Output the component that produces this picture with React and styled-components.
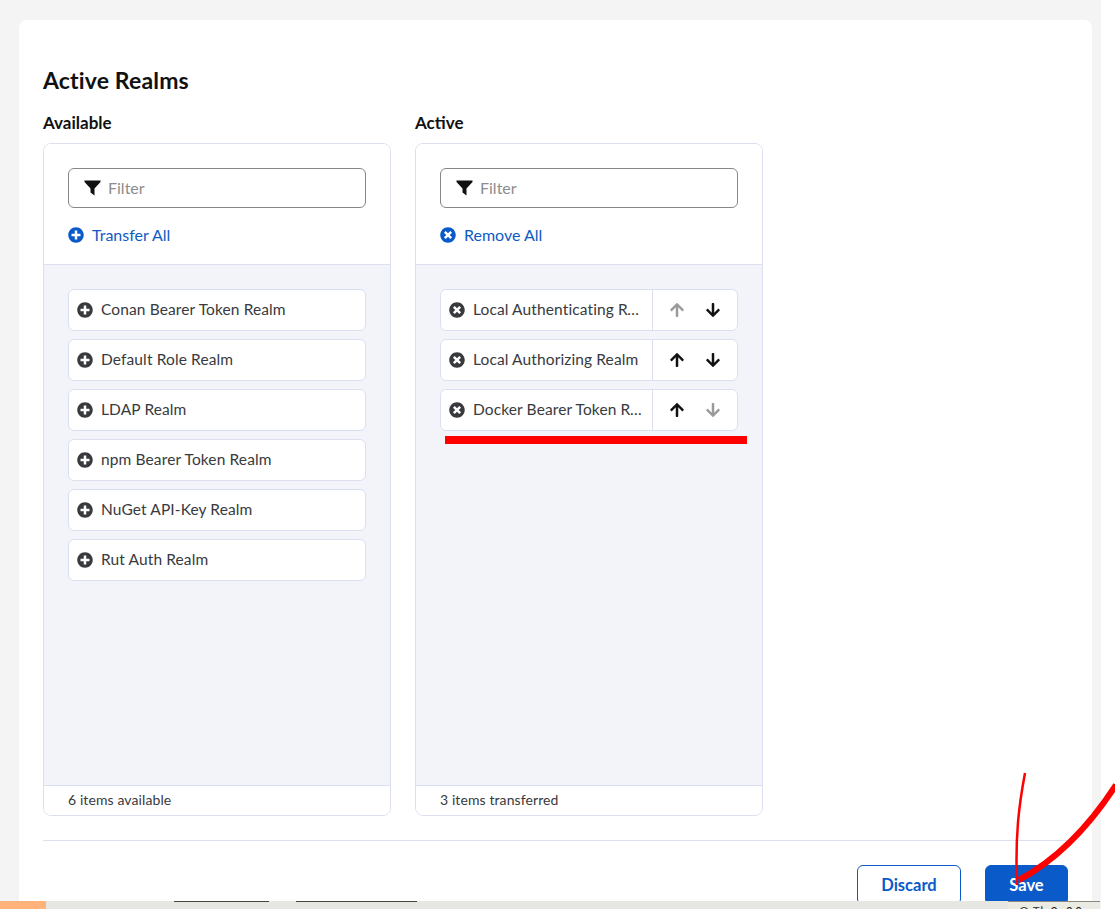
import React from 'react'
import styled, { createGlobalStyle } from 'styled-components'
import { FaPlusCircle, FaTimesCircle, FaArrowUp, FaArrowDown } from 'react-icons/fa'

const available = ['Conan Bearer Token Realm', 'Default Role Realm', 'LDAP Realm', 'npm Bearer Token Realm', 'NuGet API-Key Realm', 'Rut Auth Realm']
const active = [
    { name: 'Local Authenticating Realm', up: false, down: true },
    { name: 'Local Authorizing Realm', up: true, down: true },
    { name: 'Docker Bearer Token Realm', up: true, down: false },
]

function FilterIcon() {
    return (
        <svg viewBox="0 0 17 16" fill="currentColor">
            <path d="M0.5 0.5 H16.5 V2 L10.5 8.5 V15.5 L6.5 12.5 V8.5 L0.5 2 Z" />
        </svg>
    )
}

function TransferColumn({ title, actionIcon, actionLabel, footer, children }) {
    return (
        <Column>
            <ColumnTitle>{title}</ColumnTitle>
            <TransferBox>
                <BoxHeader>
                    <FilterField>
                        <FilterIcon />
                        <LiftedText>Filter</LiftedText>
                    </FilterField>
                    <BoxAction>
                        {actionIcon}
                        <LiftedText>{actionLabel}</LiftedText>
                    </BoxAction>
                </BoxHeader>
                <ItemList>{children}</ItemList>
                <BoxFooter>{footer}</BoxFooter>
            </TransferBox>
        </Column>
    )
}

export default function App() {
    return (
        <>
            <GlobalStyle />
            <Page>
                <Surface>
                    <Card>
                        <Heading>Active Realms</Heading>
                        <Columns>
                            <TransferColumn title="Available" actionIcon={<FaPlusCircle />} actionLabel="Transfer All" footer="6 items available">
                                {available.map((name) => (
                                    <Item key={name}>
                                        <ItemLabel>
                                            <FaPlusCircle />
                                            <ItemText>{name}</ItemText>
                                        </ItemLabel>
                                    </Item>
                                ))}
                            </TransferColumn>
                            <TransferColumn title="Active" actionIcon={<FaTimesCircle />} actionLabel="Remove All" footer="3 items transferred">
                                {active.map((item) => (
                                    <Item key={item.name}>
                                        <ItemLabel>
                                            <FaTimesCircle />
                                            <ItemText>{item.name}</ItemText>
                                        </ItemLabel>
                                        <ItemArrows>
                                            <Arrow $disabled={!item.up}><FaArrowUp /></Arrow>
                                            <Arrow $disabled={!item.down}><FaArrowDown /></Arrow>
                                        </ItemArrows>
                                    </Item>
                                ))}
                            </TransferColumn>
                        </Columns>
                        <Footer>
                            <DiscardButton>Discard</DiscardButton>
                            <SaveButton>Save</SaveButton>
                        </Footer>
                    </Card>
                    <Taskbar>
                        <TaskbarAccent />
                        <TaskbarTab $left={128} $width={95} />
                        <TaskbarTab $left={27} $width={121} />
                        <TaskbarTray>오전 9:00</TaskbarTray>
                    </Taskbar>
                </Surface>
                <Scribbles width="1115" height="909" viewBox="0 0 1115 909">
                    <rect x="445" y="436" width="302" height="8" fill="#fe0000" />
                    <path d="M1025 773 C1019 805 1015 835 1017 885" fill="none" stroke="#fe0000" strokeWidth="2.5" />
                    <path d="M1116 785 C1092 822 1060 858 1019 880" fill="none" stroke="#fe0000" strokeWidth="6" />
                </Scribbles>
            </Page>
        </>
    )
}

const GlobalStyle = createGlobalStyle`
    html, body {
        margin: 0;
        background: #fff;
    }
    body {
        font-family: "Lato", "Open Sans", sans-serif;
    }
`

const Page = styled.div`
    position: relative;
    width: 1115px;
    height: 909px;
    overflow: hidden;
    background: #fff;
`

const Surface = styled.div`
    position: relative;
    width: 1101px;
    height: 909px;
    overflow: hidden;
    padding: 20px 9px 0 19px;
    box-sizing: border-box;
    background: #f4f4f4;
`

const Card = styled.div`
    background: #fff;
    border-radius: 8px;
    padding: 46px 24px 0 24px;
    height: 889px;
    box-sizing: border-box;
`

const Heading = styled.h2`
    margin: 0;
    font-size: 23px;
    line-height: 28px;
    font-weight: 700;
    letter-spacing: 0.15px;
    color: #111;
`

const Columns = styled.div`
    display: flex;
    gap: 24px;
    margin-top: 18px;
`

const Column = styled.div`
    width: 348px;
`

const ColumnTitle = styled.div`
    font-size: 17px;
    line-height: 22px;
    font-weight: 700;
    color: #111;
    margin-bottom: 9px;
`

const TransferBox = styled.div`
    height: 673px;
    box-sizing: border-box;
    border: 1px solid #dcdff0;
    border-radius: 8px;
    display: flex;
    flex-direction: column;
    overflow: hidden;
`

const BoxHeader = styled.div`
    height: 121px;
    box-sizing: border-box;
    padding: 24px 24px 0;
    border-bottom: 1px solid #dcdff0;
    background: #fff;
`

const LiftedText = styled.span`
    padding-bottom: 2px;
`

const FilterField = styled.div`
    height: 40px;
    box-sizing: border-box;
    border: 1px solid #85878a;
    border-radius: 6px;
    display: flex;
    align-items: center;
    gap: 7px;
    padding-left: 15px;
    font-size: 16px;
    color: #8b8d90;

    svg {
        width: 17px;
        height: 16px;
        color: #111;
    }
`

const BoxAction = styled.div`
    display: flex;
    align-items: center;
    gap: 8px;
    margin-top: 17px;
    height: 20px;
    font-size: 16px;
    color: #0f5bc4;

    svg {
        width: 16px;
        height: 16px;
        color: #0a5bc9;
    }
`

const ItemList = styled.div`
    flex: 1;
    padding: 24px;
    background: #f3f4fa;
    display: flex;
    flex-direction: column;
    gap: 8px;
`

const BoxFooter = styled.div`
    height: 30px;
    box-sizing: border-box;
    flex: none;
    border-top: 1px solid #dcdff0;
    padding: 0 0 2px 24px;
    display: flex;
    align-items: center;
    font-size: 14px;
    letter-spacing: 0.1px;
    color: #383a3d;
    background: #fff;
`

const Item = styled.div`
    height: 42px;
    box-sizing: border-box;
    display: flex;
    background: #fff;
    border: 1px solid #dcdff0;
    border-radius: 6px;
`

const ItemLabel = styled.div`
    flex: 1;
    min-width: 0;
    display: flex;
    align-items: center;
    gap: 8px;
    padding-left: 8px;
    padding-right: 6px;
    font-size: 15.5px;
    letter-spacing: 0.12px;
    color: #383a3d;

    svg {
        flex: none;
        width: 16px;
        height: 16px;
        color: #383a3d;
    }
`

const ItemText = styled.span`
    padding-bottom: 2px;
    white-space: nowrap;
    overflow: hidden;
    text-overflow: ellipsis;
`

const ItemArrows = styled.div`
    flex: none;
    width: 85px;
    box-sizing: border-box;
    border-left: 1px solid #dcdff0;
    display: flex;
    align-items: center;
    justify-content: space-between;
    padding: 0 16px;
`

const Arrow = styled.span`
    display: flex;
    color: ${(props) => (props.$disabled ? '#9a9a9a' : '#111')};

    svg {
        width: 16px;
        height: 16px;
    }
`

const Footer = styled.div`
    margin-top: 24px;
    border-top: 1px solid #dcdff0;
    padding-top: 24px;
    display: flex;
    justify-content: flex-end;
    gap: 24px;
`

const DiscardButton = styled.div`
    width: 104px;
    height: 40px;
    box-sizing: border-box;
    border: 1px solid #0a5bc9;
    border-radius: 6px;
    display: flex;
    align-items: center;
    justify-content: center;
    font-size: 16.5px;
    font-weight: 700;
    color: #0a5bc9;
    background: #fff;
`

const SaveButton = styled(DiscardButton)`
    width: 83px;
    color: #fff;
    background: #0a5bc9;
`

const Taskbar = styled.div`
    position: absolute;
    left: 0;
    right: 1px;
    bottom: 0;
    height: 8px;
    display: flex;
    background: #e6e6e3;
`

const TaskbarAccent = styled.div`
    width: 46px;
    background: #ffb27a;
`

const TaskbarTab = styled.div`
    margin-left: ${(props) => props.$left}px;
    width: ${(props) => props.$width}px;
    height: 1px;
    background: #444;
`

const TaskbarTray = styled.div`
    margin-left: auto;
    width: 92px;
    box-sizing: border-box;
    border-top: 1px solid #8a8a80;
    background: #ecebe3;
    padding: 3px 0 0 10px;
    font-family: "Noto Sans CJK KR", sans-serif;
    font-size: 13px;
    line-height: 14px;
    letter-spacing: 2px;
    white-space: nowrap;
    overflow: hidden;
    color: #222;
`

const Scribbles = styled.svg`
    position: absolute;
    left: 0;
    top: 0;
    pointer-events: none;
`
